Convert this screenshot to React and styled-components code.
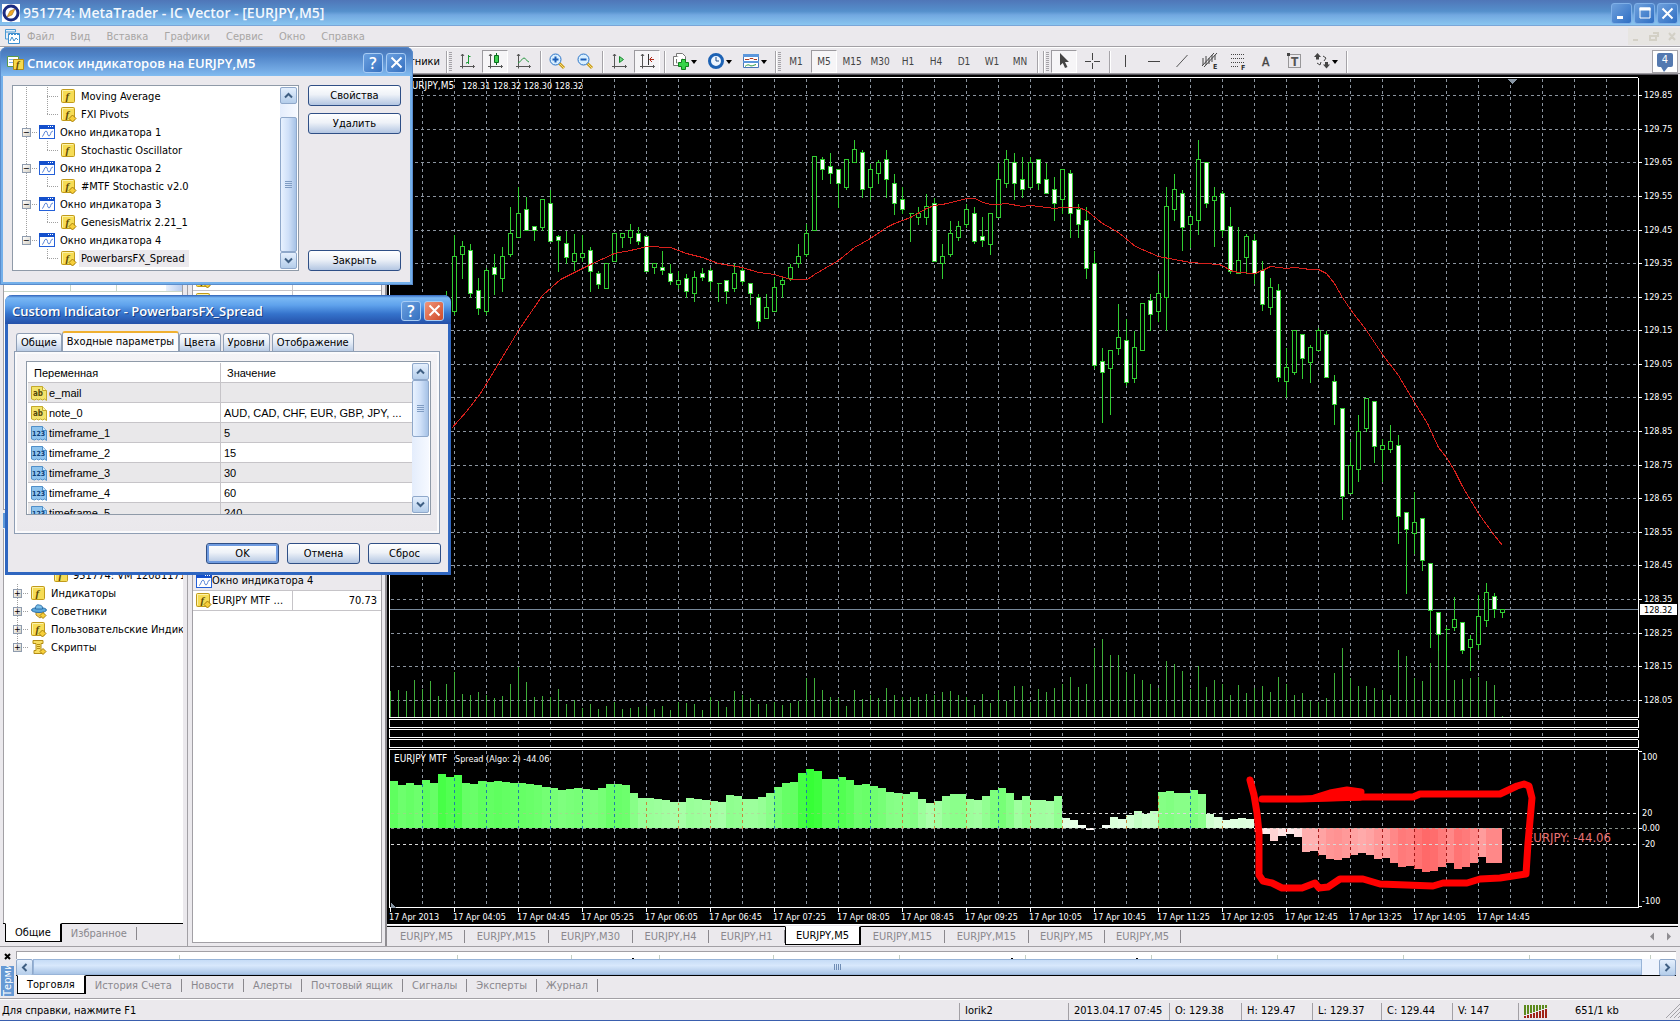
import { useState } from "react";
import styled, { createGlobalStyle, css } from "styled-components";

const FONT = `"DejaVu Sans Condensed", Tahoma, "DejaVu Sans", sans-serif`;
const TITLE_FONT = `"Open Sans", "Trebuchet MS", sans-serif`;

/* chart data: y of high, body top, body bottom, low, 1 = falling bar */
const FIRST_CANDLE = 7;
const candles = [
  [290, 297, 330, 340, 0], [234, 256, 311, 314, 0], [240, 246, 254, 278, 0], [243, 250, 293, 297, 1],
  [277, 290, 308, 314, 1], [267, 270, 311, 314, 0], [253, 267, 274, 294, 1], [246, 256, 278, 291, 0],
  [206, 233, 254, 256, 0], [186, 213, 237, 237, 0], [196, 209, 230, 230, 1], [226, 226, 230, 240, 1],
  [199, 199, 227, 230, 0], [189, 203, 241, 241, 1], [234, 236, 240, 271, 1], [230, 243, 257, 263, 1],
  [233, 253, 261, 270, 0], [234, 253, 257, 261, 0], [246, 250, 271, 291, 1], [270, 273, 284, 288, 1],
  [263, 263, 288, 288, 0], [233, 233, 261, 261, 0], [233, 233, 237, 247, 0], [223, 230, 237, 243, 0],
  [226, 233, 241, 244, 1], [236, 236, 271, 271, 1], [263, 263, 267, 273, 0], [250, 267, 270, 274, 1],
  [263, 273, 281, 284, 1], [270, 280, 284, 288, 0], [273, 278, 291, 297, 1], [270, 277, 293, 301, 0],
  [267, 273, 277, 280, 1], [267, 270, 281, 290, 1], [283, 283, 283, 301, 0], [280, 280, 291, 303, 1],
  [263, 273, 288, 291, 0], [267, 270, 281, 284, 1], [283, 283, 293, 304, 1], [293, 297, 321, 328, 1],
  [293, 307, 318, 318, 0], [277, 287, 311, 311, 0], [277, 280, 284, 297, 0], [263, 267, 278, 280, 0],
  [243, 256, 263, 267, 0], [223, 233, 254, 256, 0], [156, 156, 230, 230, 0], [156, 159, 169, 179, 1],
  [152, 166, 173, 183, 1], [168, 169, 183, 207, 1], [159, 159, 187, 189, 0], [139, 149, 162, 162, 0],
  [149, 152, 189, 197, 1], [163, 169, 187, 199, 0], [159, 162, 173, 183, 0], [149, 159, 179, 197, 1],
  [173, 183, 203, 214, 1], [186, 199, 209, 213, 1], [213, 213, 213, 241, 0], [206, 213, 217, 224, 0],
  [193, 206, 217, 224, 0], [197, 203, 261, 261, 1], [243, 256, 263, 278, 0], [220, 233, 254, 256, 0],
  [220, 226, 237, 240, 0], [203, 209, 224, 227, 0], [206, 213, 241, 243, 1], [216, 236, 240, 246, 1],
  [213, 213, 244, 254, 0], [162, 179, 217, 217, 0], [149, 159, 183, 187, 0], [152, 162, 183, 199, 1],
  [156, 179, 189, 197, 1], [156, 162, 187, 187, 0], [159, 159, 183, 189, 1], [162, 179, 193, 193, 1],
  [176, 189, 203, 220, 1], [169, 169, 199, 213, 0], [169, 173, 213, 237, 1], [203, 209, 224, 237, 1],
  [206, 220, 268, 278, 1], [250, 263, 365, 368, 1], [347, 361, 372, 422, 1], [350, 350, 368, 414, 0],
  [303, 337, 348, 354, 0], [318, 340, 382, 385, 1], [330, 347, 378, 382, 0], [303, 303, 350, 350, 0],
  [293, 300, 314, 330, 1], [273, 293, 311, 321, 0], [186, 206, 297, 330, 0], [173, 189, 209, 220, 0],
  [189, 193, 227, 250, 1], [213, 216, 224, 247, 0], [139, 159, 220, 234, 0], [162, 162, 203, 207, 1],
  [186, 196, 200, 246, 0], [190, 193, 230, 236, 1], [206, 226, 271, 273, 1], [226, 260, 273, 273, 0],
  [233, 236, 257, 273, 0], [233, 240, 273, 283, 1], [260, 270, 304, 310, 1], [277, 287, 307, 314, 0],
  [283, 290, 377, 381, 1], [347, 367, 381, 397, 0], [330, 330, 372, 374, 0], [334, 334, 358, 378, 1],
  [344, 347, 362, 382, 0], [327, 330, 350, 350, 0], [330, 334, 377, 377, 1], [374, 381, 404, 424, 1],
  [408, 408, 496, 519, 1], [441, 465, 493, 493, 0], [414, 431, 469, 481, 0], [398, 398, 428, 431, 0],
  [401, 401, 446, 462, 1], [438, 445, 449, 481, 0], [424, 441, 449, 452, 0], [434, 445, 516, 543, 1],
  [512, 512, 529, 593, 1], [491, 522, 533, 553, 0], [518, 518, 560, 570, 1], [563, 563, 610, 647, 1],
  [612, 612, 634, 650, 1], [626, 629, 629, 670, 0], [596, 619, 627, 630, 0], [622, 622, 650, 653, 1],
  [634, 639, 647, 670, 0], [594, 616, 644, 649, 0], [582, 592, 620, 626, 0], [592, 596, 609, 617, 1],
  [609, 609, 612, 617, 0],
];

const volumes = [
  690, 689, 690, 679, 688, 680, 695, 683, 671, 693, 694, 691, 694, 697, 695, 683, 666, 681, 696, 695,
  696, 688, 703, 699, 707, 703, 708, 705, 701, 708, 707, 706, 705, 708, 705, 709, 701, 702, 703, 709,
  696, 700, 706, 690, 694, 697, 703, 703, 701, 704, 702, 700, 677, 677, 689, 696, 697, 705, 689, 698,
  694, 697, 687, 694, 696, 696, 696, 693, 694, 691, 690, 694, 696, 704, 693, 702, 689, 700, 685, 685,
  701, 688, 691, 687, 683, 676, 686, 683, 647, 638, 654, 654, 671, 673, 679, 683, 687, 660, 663, 670,
  688, 665, 686, 679, 683, 694, 684, 692, 687, 685, 691, 676, 683, 694, 692, 700, 701, 697, 672, 647,
  677, 685, 685, 687, 689, 694, 649, 655, 677, 680, 662, 640, 630, 679, 678, 677, 676, 680, 684, 715,
];

const spread = [
  781, 785, 783, 785, 780, 783, 774, 777, 775, 783, 784, 781, 782, 781, 782, 783, 783, 784, 785, 787,
  788, 790, 789, 788, 789, 790, 788, 784, 784, 785, 793, 798, 798, 799, 800, 802, 802, 798, 799, 800,
  801, 802, 795, 796, 799, 799, 797, 793, 787, 783, 782, 773, 769, 771, 779, 779, 777, 780, 785, 784,
  786, 788, 792, 793, 794, 792, 799, 803, 801, 796, 794, 794, 799, 800, 796, 790, 788, 793, 800, 796,
  800, 800, 801, 796, 818, 820, 825, 830, 828, 825, 817, 819, 815, 811, 814, 811, 792, 791, 793, 793,
  790, 794, 814, 817, 820, 819, 818, 819, 832, 834, 841, 836, 834, 837, 852, 851, 855, 859, 860, 858,
  855, 853, 855, 859, 858, 863, 867, 866, 869, 872, 871, 867, 863, 869, 867, 863, 857, 863, 863,
];
const ZERO = 828;

const maLine =
  "451,428 466,411 480,393 500,360 518,330 542,295 560,279 590,264 614,253 630,250 647,246 670,247 686,253 702,257 718,263 742,267 758,272 774,274 790,279 796,279 807,279 814,274 838,260 854,247 870,238 886,227 894,223 910,217 926,208 934,205 942,204 967,198 974,198 983,202 990,204 998,204 1006,203 1022,206 1030,205 1054,208 1062,207 1078,207 1086,210 1102,223 1118,232 1135,246 1158,256 1174,259 1190,262 1218,264 1222,265 1230,270 1238,272 1254,273 1262,270 1270,266 1286,268 1294,267 1310,269 1318,269 1326,273 1334,283 1342,297 1350,309 1366,330 1382,354 1398,375 1414,402 1427,423 1438,447 1446,457 1454,470 1462,486 1478,513 1494,535 1502,545";

const markerLine =
  "1250,780 1254,795 1257,813 1259,833 1259,875 1263,881 1272,883 1282,888 1302,888 1315,883 1319,888 1328,887 1340,879 1363,879 1380,884 1433,886 1443,883 1467,883 1480,879 1500,878 1526,874 1528,843 1532,798 1529,786 1524,784 1517,786 1500,794 1420,794 1413,797 1363,797 1300,799 1262,799";

const priceLevels = [
  [95, "129.85"], [129, "129.75"], [162, "129.65"], [196, "129.55"], [230, "129.45"], [263, "129.35"],
  [297, "129.25"], [330, "129.15"], [364, "129.05"], [397, "128.95"], [431, "128.85"], [465, "128.75"],
  [498, "128.65"], [532, "128.55"], [565, "128.45"], [599, "128.35"], [633, "128.25"], [666, "128.15"],
  [700, "128.05"],
];
const spreadLevels = [[757, "100"], [813, "20"], [828, "0.00"], [844, "-20"], [901, "-100"]];
const frames = [[77, 717], [719, 727], [729, 737], [739, 747], [749, 907]];
const times = [
  "2013", "04:05", "04:45", "05:25", "06:05", "06:45", "07:25", "08:05", "08:45", "09:25", "10:05",
  "10:45", "11:25", "12:05", "12:45", "13:25", "14:05", "14:45",
];
const barX = (i) => 390 + i * 8;

const menuItems = ["Файл", "Вид", "Вставка", "Графики", "Сервис", "Окно", "Справка"];
const frameItems = ["M1", "M5", "M15", "M30", "H1", "H4", "D1", "W1", "MN"];
const chartTabs = ["M5", "M15", "M30", "H4", "H1", "M5", "M15", "M15", "M5", "M5"];
const terminalTabs = [
  "Торговля", "История Счета", "Новости", "Алерты", "Почтовый ящик", "Сигналы", "Эксперты", "Журнал",
];
/* column width, distance of the row mark from the right edge */
const terminalCells = [
  [163], [278], [114], [88, 25], [114], [126], [126, 12], [126, 13], [126], [126], [126], [121],
];
const indicators = [
  { name: "Moving Average" },
  { name: "FXI Pivots", custom: true, last: true },
  { name: "Окно индикатора 1", win: true },
  { name: "Stochastic Oscillator", last: true },
  { name: "Окно индикатора 2", win: true },
  { name: "#MTF Stochastic v2.0", custom: true, last: true },
  { name: "Окно индикатора 3", win: true },
  { name: "GenesisMatrix 2.21_1", custom: true, last: true },
  { name: "Окно индикатора 4", win: true },
  { name: "PowerbarsFX_Spread", custom: true, last: true, selected: true },
];
const params = [
  ["ab", "e_mail", ""],
  ["ab", "note_0", "AUD, CAD, CHF, EUR, GBP, JPY, ..."],
  ["123", "timeframe_1", "5"],
  ["123", "timeframe_2", "15"],
  ["123", "timeframe_3", "30"],
  ["123", "timeframe_4", "60"],
  ["123", "timeframe_5", "240"],
];
const dialogTabs = ["Общие", "Входные параметры", "Цвета", "Уровни", "Отображение"];
const statusCells = [
  [109, "Iorik2"], [101, "2013.04.17 07:45"], [72, "O: 129.38"], [71, "H: 129.47"], [69, "L: 129.37"],
  [71, "C: 129.44"], [66, "V: 147"],
];

/* ---------- icons ---------- */
function FIcon({ custom }) {
  return (
    <svg width="16" height="15" viewBox="0 0 16 15" aria-hidden="true">
      <rect x=".5" y=".5" width="13" height="13" rx="1" fill="#f6dc55" stroke="#c09a1c" />
      <path d="M1.5 12V1.5H12" fill="none" stroke="#fdf3a8" />
      <text x="4.5" y="10.5" fontFamily="Liberation Serif, serif" fontStyle="italic" fontWeight="bold" fontSize="11" fill="#5e4a08">f</text>
      {custom && <path d="M11.5 8 15 11.5 11.5 15 8 11.5z" fill="#f7cf3a" stroke="#a8800c" />}
    </svg>
  );
}
function WinIcon() {
  return (
    <svg width="16" height="14" viewBox="0 0 16 14" aria-hidden="true">
      <rect x=".5" y=".5" width="15" height="13" fill="#fff" stroke="#2460d8" />
      <path d="M0 0h16v4H0z" fill="#1450cc" />
      <path d="M9 1.5h1M11 1.5h1M13 1.5h1" stroke="#fff" />
      <path d="M3 11.5C5 11.5 5 6 7 6s1 5 3 5 1-5 4-5" fill="none" stroke="#5b86d8" />
    </svg>
  );
}
function ParamIcon({ kind }) {
  const text = kind === "ab";
  return (
    <svg width="16" height="16" viewBox="0 0 16 16" aria-hidden="true">
      <path
        d="M.5 1.5h11l4 4v10l-2-1.500-2 1-2-1-2 1-2-1-2 1-3-1z"
        fill={text ? "#f3e36c" : "#8fc4ee"}
        stroke={text ? "#c2a92c" : "#4f8fc8"}
      />
      <path d="M11.500 1.500v4h4" fill={text ? "#fdf6b4" : "#d3eafb"} stroke={text ? "#c2a92c" : "#4f8fc8"} />
      <text x={text ? 2 : 1} y="11" fontFamily={FONT} fontWeight="bold" fontSize={text ? 8 : 7} fill={text ? "#55490a" : "#0d3f78"}>
        {kind}
      </text>
    </svg>
  );
}
function AgentIcon() {
  return (
    <svg width="16" height="15" viewBox="0 0 16 15" aria-hidden="true">
      <path d="M5 7h7l1 4-4 3-4-3z" fill="#f2cd5a" stroke="#b08a20" />
      <ellipse cx="8" cy="6" rx="7.500" ry="2.500" fill="#5aa7dc" stroke="#2c6fa8" />
      <path d="M4.500 5C4.500 1 6 .5 8 1s3.500 0 3.500 4z" fill="#7cc0ea" stroke="#2c6fa8" />
      <path d="M12 8.500 15 11.500 12 14.500 9 11.500z" fill="#f7cf3a" stroke="#a8800c" />
    </svg>
  );
}
function ScriptIcon() {
  return (
    <svg width="16" height="15" viewBox="0 0 16 15" aria-hidden="true">
      <path d="M2 .5h10v3H10v7h2v3H3v-3h2v-7H2z" fill="#f8de62" stroke="#b58d14" />
      <path d="M6 4.500h3M6 6.500h3M6 8.500h3" stroke="#b58d14" />
      <path d="M12 8.500 15 11.500 12 14.500 9 11.500z" fill="#f7cf3a" stroke="#a8800c" />
    </svg>
  );
}
const axes = "M3.500 1v14.500M1 13.500h14.500M2 3l1.500-2L5 3M14 12l1.500 1.500L14 15";
const toolPaths = {
  bars: (
    <>
      <path d={axes} stroke="#555" fill="none" />
      <path d="M9.500 2v9M9.500 3.500h2M7.500 9.500h2M7.500 9.500v1" stroke="#1a9a34" fill="none" />
    </>
  ),
  candles: (
    <>
      <path d={axes} stroke="#555" fill="none" />
      <path d="M9.500 0v12" stroke="#0b6b1e" />
      <path d="M7.500 2.500h4v7h-4z" fill="#3fd050" stroke="#0b6b1e" />
    </>
  ),
  line: (
    <>
      <path d={axes} stroke="#555" fill="none" />
      <path d="M3 10C6 9 7 5 9 5s2 3 5 4" stroke="#2c9a44" fill="none" />
    </>
  ),
  scroll: (
    <>
      <path d={axes} stroke="#555" fill="none" />
      <path d="M8.500 3.500v6l4-3z" fill="#6fd67f" stroke="#168a2e" />
    </>
  ),
  shift: (
    <>
      <path d={axes} stroke="#555" fill="none" />
      <path d="M9.500 1v11" stroke="#333" />
      <path d="M15 6.500h-4M13 4l-2.500 2.500L13 9" stroke="#b02a1a" fill="none" />
    </>
  ),
  zoomIn: (
    <>
      <path d="M10 10l5 5" stroke="#c89a1c" strokeWidth="3" />
      <path d="M10 10l5 5" stroke="#f6e07a" />
      <circle cx="6.500" cy="6.500" r="5.500" fill="#d9efff" stroke="#2a74c8" />
      <path d="M3.500 6.500h6M6.500 3.500v6" stroke="#1c5fb8" strokeWidth="2" />
    </>
  ),
  zoomOut: (
    <>
      <path d="M10 10l5 5" stroke="#c89a1c" strokeWidth="3" />
      <path d="M10 10l5 5" stroke="#f6e07a" />
      <circle cx="6.500" cy="6.500" r="5.500" fill="#d9efff" stroke="#2a74c8" />
      <path d="M3.500 6.500h6" stroke="#1c5fb8" strokeWidth="2" />
    </>
  ),
  add: (
    <>
      <path d="M.5 3.500h7l3 3v6H.5z" fill="#fff" stroke="#777" />
      <path d="M3.500 3V.5h6l3 3V7" fill="#fff" stroke="#777" />
      <path d="M3.500 6v4h1" fill="none" stroke="#777" />
      <path d="M8.500 6.500h4v3h3v4h-3v3h-4v-3h-3v-4h3z" fill="#35d448" stroke="#12801f" />
    </>
  ),
  clock: (
    <>
      <circle cx="8" cy="8" r="6.500" fill="#eef6ff" stroke="#1d62b4" strokeWidth="3" />
      <path d="M8 4v4h3" stroke="#1d4a84" fill="none" />
    </>
  ),
  template: (
    <>
      <path d="M.5 1.500h15v13H.5z" fill="#fff" stroke="#4a78b8" />
      <path d="M0 1h16v3H0zM0 8h16v2H0z" fill="#5b97dc" />
      <path d="M2 6.500h4l1-1h3l1 1h3" stroke="#b03a20" fill="none" />
      <path d="M2 13.500c2-2 4-2 5-1s3 0 6-1" stroke="#2c9a44" fill="none" />
    </>
  ),
  cursor: <path d="M4 0l9 9H9l2.500 5-2.500 1-2.200-5L4 12.500z" fill="#444" />,
  cross: <path d="M8.500 0v7M8.500 10v6M1 8.500h6M10 8.500h6" stroke="#444" />,
  vline: <path d="M7.500 2v12" stroke="#444" />,
  hline: <path d="M2 8.500h12" stroke="#444" />,
  trend: <path d="M2.500 14 13.500 2" stroke="#555" />,
  channel: (
    <>
      <path d="M0 13 12 0M2 14 15 0M1 5v7M4 3v9M7 5v6M10 2v7M13 2v5" stroke="#444" fill="none" />
      <text x="11" y="16" fontSize="7" fontWeight="bold" fill="#333" fontFamily={FONT}>E</text>
    </>
  ),
  fibo: (
    <>
      <path d="M1 1.500h14M1 5.500h14M1 9.500h14M1 13.500h8" stroke="#444" strokeDasharray="1 1" />
      <text x="11" y="17" fontSize="7" fontWeight="bold" fill="#333" fontFamily={FONT}>F</text>
    </>
  ),
  text: <text x="4" y="13" fontSize="12" fill="#444" stroke="#444" strokeWidth=".4" fontFamily={FONT}>A</text>,
  label: (
    <>
      <path d="M2.500 1.500h12v13h-12z" fill="none" stroke="#444" strokeDasharray="1 1" />
      <path d="M1 0h3v3H1z" fill="#444" />
      <text x="5" y="13" fontSize="12" fontWeight="bold" fill="#555" fontFamily={FONT}>T</text>
    </>
  ),
  arrows: (
    <>
      <path d="M3.500 0 7 4H5v2.500H2V4H0zM12.500 15.500 9 11.500h2V9h3v2.500h2z" fill="#444" />
      <path d="M3 10l3 2 1-3M9 3l3 2-2 3" stroke="#444" fill="none" />
    </>
  ),
};

function Tool({ icon, label, pressed, menu }) {
  return (
    <ToolButton type="button" aria-label={label} $pressed={pressed} $menu={menu}>
      <svg width="16" height="17" viewBox="0 0 16 17" overflow="visible" aria-hidden="true">
        {toolPaths[icon]}
      </svg>
      {menu && (
        <svg width="6" height="4" viewBox="0 0 6 4" aria-hidden="true">
          <path d="M0 0h6L3 4z" fill="#000" />
        </svg>
      )}
    </ToolButton>
  );
}

function Chevron({ dir }) {
  const turn = { up: 0, right: 90, down: 180, left: 270 }[dir];
  return (
    <svg width="9" height="9" viewBox="0 0 9 9" aria-hidden="true">
      <path d="M1 6.500 4.500 3 8 6.500" fill="none" stroke="#3f5f83" strokeWidth="2" transform={`rotate(${turn} 4.500 4.500)`} />
    </svg>
  );
}

function VScroll({ before, size }) {
  return (
    <ScrollTrack>
      <ScrollButton type="button" aria-label="Вверх"><Chevron dir="up" /></ScrollButton>
      <ScrollGap $h={before} />
      <ScrollThumb $h={size}><i /><i /><i /><i /></ScrollThumb>
      <Fill />
      <ScrollButton type="button" aria-label="Вниз"><Chevron dir="down" /></ScrollButton>
    </ScrollTrack>
  );
}

/* ---------- chart ---------- */
function Candle({ x, data }) {
  const [high, top, bottom, low, falling] = data;
  const body = bottom - top;
  return (
    <g stroke="#32cd32">
      {high < top && <path d={`M${x} ${high}V${top}`} />}
      {low > bottom && <path d={`M${x} ${bottom}V${low}`} />}
      {body ? (
        <rect x={x - 2} y={top} width="4" height={body} fill={falling ? "#fff" : "#000"} />
      ) : (
        <path d={`M${x - 2} ${top}h5`} />
      )}
    </g>
  );
}

function spreadColor(y) {
  const size = Math.abs(ZERO - y);
  const rest = Math.round(255 - size * 3.4);
  return y > ZERO ? `rgb(255,${rest},${rest})` : `rgb(${rest},255,${rest})`;
}

function gridOverBar(y) {
  if (y > ZERO) return "#a01818";
  return ZERO - y > 37 ? "#1f7fa8" : "#c8863c";
}

function Chart() {
  return (
    <ChartCanvas>
      <Plot role="img" aria-label="EURJPY,M5">
        <g transform="translate(-386.500 -74.500)" fill="none" shapeRendering="crispEdges">
          <g stroke="#8b949f" strokeDasharray="3 3">
            {Array.from({ length: 60 }, (_, k) => (
              <path key={k} d={`M${422 + k * 32} 78V906`} />
            ))}
            {priceLevels.map(([y]) => (
              <path key={y} d={`M390 ${y}H2400`} />
            ))}
          </g>
          <path d="M389 609H2400" stroke="#778899" />
          <g stroke="#3fae3a">
            {volumes.map((y, i) => (
              <path key={i} d={`M${barX(i)} ${y}V717`} />
            ))}
          </g>
          {candles.map((c, i) => (
            <Candle key={i} x={barX(i + FIRST_CANDLE)} data={c} />
          ))}
          <polyline points={maLine} stroke="#d8201c" />

          {spread.map((y, i) => (
            <rect
              key={i}
              x={barX(i) - 0.5}
              y={Math.min(y, ZERO) - 0.5}
              width="8"
              height={Math.abs(ZERO - y)}
              fill={spreadColor(y)}
            />
          ))}
          {spread.map((y, i) =>
            i % 4 === 0 && i > 0 ? (
              <path key={i} d={`M${barX(i)} ${ZERO}V${y}`} stroke={gridOverBar(y)} strokeDasharray="3 3" />
            ) : null
          )}
          <path d="M390 813H1180" stroke="#c8b49a" strokeDasharray="3 3" opacity=".4" />
          <path d="M390 828H2400" stroke="#a9b3ad" strokeDasharray="3 3" opacity=".8" />
          <path d="M1062 813H2400M390 844H2400" stroke="#d8d8d8" strokeDasharray="3 3" />

          {frames.map(([top, bottom]) => (
            <path key={top} d={`M2400 ${top}H389V${bottom}H2400`} stroke="#fff" />
          ))}
          {times.map((t, i) => (
            <path key={t} d={`M${390 + i * 64} 907v4`} stroke="#fff" />
          ))}
          <path d="M1507 78h10l-5 6z" fill="#8795a3" />
          <path d="M390 902v5h5z" fill="#8795a3" />
        </g>
        <g transform="translate(-387 -75)">
          <ChartText x="406" y="89" $size={10}>EURJPY,M5</ChartText>
          <ChartText x="462" y="89">128.31 128.32 128.30 128.32</ChartText>
          <ChartText x="394" y="762" $size={10}>EURJPY MTF</ChartText>
          <ChartText x="455" y="762">Spread (Algo: 2) -44.06</ChartText>
          {times.map((t, i) => (
            <ChartText key={t} x={389 + i * 64} y="920">17 Apr {t}</ChartText>
          ))}
          <ChartText x="1611" y="842" textAnchor="end" $size={13} $color="#ea7474">EURJPY: -44.06</ChartText>
          <g fill="none" stroke="#f00" strokeWidth="7" strokeLinecap="round" strokeLinejoin="round">
            <polyline points={markerLine} />
            <path d="M1314 798 1330 793 1347 790 1361 792 1360 797z" fill="#f00" />
          </g>
        </g>
      </Plot>
      <Axis aria-hidden="true">
        <g transform="translate(-1637.500 -74.500)" stroke="#fff" shapeRendering="crispEdges">
          {frames.map(([top, bottom]) => (
            <path key={top} d={`M1638 ${top}V${bottom}`} />
          ))}
          {priceLevels.map(([y]) => (
            <path key={y} d={`M1638 ${y}h3`} />
          ))}
          <path d="M1638 751h3M1638 828h3M1638 906h3" />
          <path d="M1640 604h36v10h-36z" fill="#fff" />
        </g>
        <g transform="translate(-1638 -75)">
          {priceLevels.map(([y, t]) => (
            <ChartText key={t} x="1644" y={y + 3}>{t}</ChartText>
          ))}
          <ChartText x="1644" y="613" $color="#000">128.32</ChartText>
          {spreadLevels.map(([y, t]) => (
            <ChartText key={t} x="1642" y={y + 3}>{t}</ChartText>
          ))}
        </g>
      </Axis>
    </ChartCanvas>
  );
}

/* ---------- windows ---------- */
function IndicatorList() {
  return (
    <ListDialog role="dialog" aria-label="Список индикаторов на EURJPY,M5">
      <DialogTitle>
        <svg width="17" height="15" viewBox="0 0 17 15" aria-hidden="true">
          <path d="M.5 1.500h11v10H.5z" fill="#fff" stroke="#5d9a48" />
          <path d="M2 4.500h8M2 7.500h8" stroke="#7db2e8" />
          <path d="M6.500 4.500h10v10h-10z" fill="#f6d94a" stroke="#b38d14" />
          <text x="9" y="13" fontFamily="Liberation Serif, serif" fontStyle="italic" fontWeight="bold" fontSize="10" fill="#5e4a08">f</text>
        </svg>
        <span>Список индикаторов на EURJPY,M5</span>
        <TitleButton type="button" aria-label="Справка">?</TitleButton>
        <TitleButton type="button" aria-label="Закрыть"><CloseMark /></TitleButton>
      </DialogTitle>
      <ListBody>
        <ListBox>
          <Tree>
            {indicators.map((row) => (
              <TreeRow key={row.name}>
                {row.win ? (
                  <>
                    <RootBranch $end={row.name.endsWith("4")}><Expander>−</Expander></RootBranch>
                    <WinIcon />
                    <TreeLabel $gap={3}>{row.name}</TreeLabel>
                  </>
                ) : (
                  <>
                    <RootBranch $plain $hide={row.selected} />
                    <ChildBranch $last={row.last} />
                    <FIcon custom={row.custom} />
                    <TreeLabel $gap={2} $selected={row.selected}>{row.name}</TreeLabel>
                  </>
                )}
              </TreeRow>
            ))}
          </Tree>
          <VScroll before={13} size={135} />
        </ListBox>
        <ButtonColumn>
          <XpButton type="button">Свойства</XpButton>
          <XpButton type="button">Удалить</XpButton>
          <Fill />
          <XpButton type="button">Закрыть</XpButton>
        </ButtonColumn>
      </ListBody>
    </ListDialog>
  );
}

function CloseMark() {
  return (
    <svg width="13" height="13" viewBox="0 0 13 13" aria-hidden="true">
      <path d="M1.500 1.500l10 10M11.500 1.500l-10 10" stroke="#fff" strokeWidth="2" />
    </svg>
  );
}

function ParamsDialog() {
  const [tab, setTab] = useState(1);
  return (
    <IndicatorDialog role="dialog" aria-label="Custom Indicator - PowerbarsFX_Spread">
      <DialogTitle $active>
        <span>Custom Indicator - PowerbarsFX_Spread</span>
        <TitleButton type="button" aria-label="Справка">?</TitleButton>
        <TitleButton type="button" $danger aria-label="Закрыть"><CloseMark /></TitleButton>
      </DialogTitle>
      <DialogTabs role="tablist">
        {dialogTabs.map((t, i) => (
          <DialogTab key={t} type="button" role="tab" aria-selected={tab === i} $on={tab === i} onClick={() => setTab(i)}>
            {t}
          </DialogTab>
        ))}
      </DialogTabs>
      <TabPage>
        <TableBox>
          <ParamTable>
            <thead>
              <tr><th>Переменная</th><th>Значение</th></tr>
            </thead>
            <tbody>
              {params.map(([kind, name, value]) => (
                <tr key={name}>
                  <td><ParamName><ParamIcon kind={kind} />{name}</ParamName></td>
                  <td>{value}</td>
                </tr>
              ))}
            </tbody>
          </ParamTable>
          <VScroll before={0} size={57} />
        </TableBox>
      </TabPage>
      <DialogFooter>
        <XpButton type="button" $primary>OK</XpButton>
        <XpButton type="button">Отмена</XpButton>
        <XpButton type="button">Сброс</XpButton>
      </DialogFooter>
    </IndicatorDialog>
  );
}

export default function App() {
  return (
    <Desktop>
      <GlobalStyle />
      <TitleBar>
        <svg width="18" height="18" viewBox="0 0 18 18" aria-hidden="true">
          <path d="M0 0h18v18H0z" fill="#fff" />
          <circle cx="9" cy="9" r="7" fill="#fff" stroke="#1b2a80" strokeWidth="3" />
          <path d="M13 5 10 11 5 13 8 7z" fill="#f0a828" stroke="#8a5a10" strokeWidth=".5" />
        </svg>
        <h1>951774: MetaTrader - IC Vector - [EURJPY,M5]</h1>
        <WindowButton type="button" aria-label="Свернуть">
          <svg width="12" height="12" aria-hidden="true"><path d="M1 9h6v3H1z" fill="#fff" /></svg>
        </WindowButton>
        <WindowButton type="button" aria-label="Развернуть">
          <svg width="12" height="12" aria-hidden="true">
            <path d="M1 1h10v10H1z" fill="none" stroke="#fff" />
            <path d="M.5.5h11v3H.5z" fill="#fff" />
          </svg>
        </WindowButton>
        <WindowButton type="button" aria-label="Закрыть"><CloseMark /></WindowButton>
      </TitleBar>

      <MenuBar>
        <svg width="15" height="15" viewBox="0 0 15 15" aria-hidden="true">
          <path d="M.5 3V.5h10V3M.5 3v7h3" fill="#e4f0fb" stroke="#4a9ad4" />
          <path d="M.5 3h10" stroke="#4a9ad4" />
          <path d="M3.500 4.500h11v10h-11z" fill="#fff" stroke="#3d8fd0" />
          <path d="M3 5.500h11" stroke="#3d8fd0" strokeDasharray="2 1" />
          <path d="M5 12l2-4 2 4 2-3 2 2" fill="none" stroke="#3d8fd0" />
        </svg>
        {menuItems.map((m) => (
          <MenuItem key={m} type="button">{m}</MenuItem>
        ))}
        <Fill />
        <svg width="52" height="17" viewBox="0 0 52 17" aria-hidden="true">
          <path d="M0 0h52v17H0z" fill="#e7e5e2" />
          <path d="M5 12h5M25 5h5v4M22 8h6v4h-6zM41 5l6 7M47 5l-6 7" fill="none" stroke="#d3d0c6" strokeWidth="2" />
        </svg>
      </MenuBar>

      <Toolbar>
        <ExpertsButton type="button">Советники</ExpertsButton>
        <Divider /><Grip />
        <Tool icon="bars" label="Бары" />
        <Tool icon="candles" label="Свечи" pressed />
        <Tool icon="line" label="Линия" />
        <Divider />
        <Tool icon="zoomIn" label="Увеличить" />
        <Tool icon="zoomOut" label="Уменьшить" />
        <Divider />
        <Tool icon="scroll" label="Автопрокрутка" />
        <Tool icon="shift" label="Сдвиг графика" pressed />
        <Divider />
        <Tool icon="add" label="Индикаторы" menu />
        <Tool icon="clock" label="Периоды" menu />
        <Tool icon="template" label="Шаблоны" menu />
        <Divider /><Grip />
        {frameItems.map((f) => (
          <ToolButton key={f} type="button" $pressed={f === "M5"}>{f}</ToolButton>
        ))}
        <Divider /><Divider /><Grip />
        <Tool icon="cursor" label="Курсор" pressed />
        <Tool icon="cross" label="Перекрестие" />
        <Divider />
        <Tool icon="vline" label="Вертикальная линия" />
        <Tool icon="hline" label="Горизонтальная линия" />
        <Tool icon="trend" label="Трендовая линия" />
        <Tool icon="channel" label="Канал" />
        <Tool icon="fibo" label="Фибоначчи" />
        <Tool icon="text" label="Текст" />
        <Tool icon="label" label="Метка" />
        <Tool icon="arrows" label="Стрелки" menu />
        <Divider />
        <Fill />
        <NewsButton type="button">
          <NewsBadge>4</NewsBadge>
          <svg width="8" height="5" viewBox="0 0 8 5" aria-hidden="true">
            <path d="M0 0h7L3 5z" fill="#5479b0" />
          </svg>
        </NewsButton>
      </Toolbar>

      <Workspace>
        <SideColumn>
          <MarketBox><MarketGrid><i /><i /><i /></MarketGrid></MarketBox>
          <PanelCaption />
          <NavTree>
            <NavRow $child><FIcon /><TreeLabel $gap={1}>951774: VM 12081171</TreeLabel></NavRow>
            <NavRow><NavBranch><Expander>+</Expander></NavBranch><FIcon /><TreeLabel $gap={2}>Индикаторы</TreeLabel></NavRow>
            <NavRow><NavBranch><Expander>+</Expander></NavBranch><AgentIcon /><TreeLabel $gap={2}>Советники</TreeLabel></NavRow>
            <NavRow><NavBranch><Expander>+</Expander></NavBranch><FIcon custom /><TreeLabel $gap={2}>Пользовательские Индикаторы</TreeLabel></NavRow>
            <NavRow><NavBranch $end><Expander>+</Expander></NavBranch><ScriptIcon /><TreeLabel $gap={2}>Скрипты</TreeLabel></NavRow>
          </NavTree>
          <NavTabs>
            <SheetTab type="button" $on>Общие</SheetTab>
            <SheetTab type="button">Избранное</SheetTab>
          </NavTabs>
        </SideColumn>

        <DataColumn>
          <DataBox>
            <DataTable>
              <tbody>
                {Array.from({ length: 15 }, (_, i) => (
                  <tr key={i}><td><DataName>{i < 2 && <FIcon custom />}</DataName></td><td /></tr>
                ))}
                <tr><DataHead colSpan="2"><DataName><WinIcon />Окно индикатора 4</DataName></DataHead></tr>
                <tr><td><DataName><FIcon custom />EURJPY MTF ...</DataName></td><td>70.73</td></tr>
              </tbody>
            </DataTable>
          </DataBox>
        </DataColumn>

        <ChartColumn>
          <Chart />
          <ChartTabs>
            {chartTabs.map((t, i) => (
              <SheetTab key={i} type="button" $on={i === 5} $w={t.length > 2 ? 84 : 76}>EURJPY,{t}</SheetTab>
            ))}
            <Fill />
            <svg width="22" height="9" viewBox="0 0 22 9" aria-hidden="true">
              <path d="M4 .5v8L0 4.500zM17 .5v8l4-4z" fill="#8f8d92" />
            </svg>
          </ChartTabs>
        </ChartColumn>
      </Workspace>

      <Terminal>
        <TerminalSide>
          <svg width="7" height="7" viewBox="0 0 7 7" aria-hidden="true">
            <path d="M1 1l5 5M6 1 1 6" stroke="#000" strokeWidth="2" />
          </svg>
          <TerminalName>Терминал</TerminalName>
        </TerminalSide>
        <TerminalBody>
          <TerminalRow>
            {terminalCells.map(([w, mark], i) => (
              <TerminalCell key={i} $w={w} $mark={mark}>{mark && <i />}</TerminalCell>
            ))}
          </TerminalRow>
          <HScroll>
            <ScrollButton type="button" aria-label="Влево"><Chevron dir="left" /></ScrollButton>
            <HThumb><i /><i /><i /><i /></HThumb>
            <HGap />
            <ScrollButton type="button" aria-label="Вправо"><Chevron dir="right" /></ScrollButton>
          </HScroll>
          <TerminalTabs>
            {terminalTabs.map((t, i) => (
              <SheetTab key={t} type="button" $on={i === 0}>{t}</SheetTab>
            ))}
          </TerminalTabs>
        </TerminalBody>
      </Terminal>

      <StatusBar>
        <StatusHint>Для справки, нажмите F1</StatusHint>
        {statusCells.map(([w, t]) => (
          <StatusCell key={t} $w={w}>{t}</StatusCell>
        ))}
        <StatusCell $w={162}>
          <svg width="24" height="13" viewBox="0 0 24 13" shapeRendering="crispEdges" aria-hidden="true">
            {Array.from({ length: 8 }, (_, i) => (
              <g key={i}>
                <path d={`M${i * 3} 0h2v${10 - i}h-2z`} fill="#5c8a1c" />
                <path d={`M${i * 3} 13h2v-${2 + i}h-2z`} fill="#a02418" />
              </g>
            ))}
          </svg>
          <Traffic>651/1 kb</Traffic>
          <svg width="14" height="14" viewBox="0 0 14 14" aria-hidden="true">
            <path d="M0 14 14 0M4 14 14 4M8 14l6-6M12 14l2-2" stroke="#a5a3a8" />
          </svg>
        </StatusCell>
      </StatusBar>

      <IndicatorList />
      <ParamsDialog />
    </Desktop>
  );
}

/* ---------- styles ---------- */
const GlobalStyle = createGlobalStyle`
  * { box-sizing: border-box; }
  body { margin: 0; background: #ebe9ed; }
  button { font: inherit; color: inherit; margin: 0; padding: 0; border: 0; background: none; }
  svg { flex: none; display: block; }
`;
const Desktop = styled.div`
  position: relative;
  display: flex;
  flex-direction: column;
  min-height: 100vh;
  overflow: hidden;
  font-family: ${FONT};
  font-size: 11px;
  line-height: 14px;
  color: #000;
  background: #ebe9ed;
`;
const Fill = styled.span`
  flex: 1;
`;
const TitleBar = styled.header`
  display: flex;
  align-items: center;
  gap: 2px;
  height: 26px;
  padding: 1px 2px 0;
  border-bottom: 1px solid #7aa6d8;
  background: linear-gradient(#4f76b8, #5590cc 45%, #72a8e0 60%, #8ac6f0);
  h1 {
    flex: 1;
    margin: 0;
    padding-left: 1px;
    font: 600 14px/18px ${TITLE_FONT};
    color: #f4f8fd;
  }
`;
const WindowButton = styled.button`
  display: grid;
  place-items: center;
  width: 21px;
  height: 21px;
  border: 1px solid #7fb0e8;
  border-radius: 3px;
  background: linear-gradient(135deg, #6ea0dc, #2f6fc4);
`;
const MenuBar = styled.nav`
  display: flex;
  align-items: center;
  height: 21px;
  padding-left: 5px;
  border-bottom: 1px solid #a2a0a5;
`;
const MenuItem = styled.button`
  margin: 0 9px 0 7px;
  padding-top: 1px;
  color: #a8a6a4;
`;
const Toolbar = styled.div`
  display: flex;
  align-items: center;
  height: 27px;
  padding: 2px 2px 0 381px;
  border-top: 1px solid #fff;
  border-bottom: 1px solid #9c9a9f;
`;
const ExpertsButton = styled.button`
  width: 62px;
  text-align: center;
`;
const Divider = styled.span`
  width: 1px;
  height: 22px;
  margin: 0 2px 0 3px;
  background: #a5a3a8;
  box-shadow: 1px 0 #fff;
`;
const Grip = styled.span`
  width: 3px;
  height: 19px;
  margin-right: 1px;
  background: repeating-linear-gradient(#a5a3a8 0 1px, transparent 1px 2px);
`;
const ToolButton = styled.button`
  display: flex;
  align-items: center;
  justify-content: center;
  gap: 2px;
  width: ${(props) => (props.$menu ? 35 : 28)}px;
  height: 23px;
  font-size: 10px;
  color: #444;
  ${(props) =>
    props.$pressed &&
    css`
      margin: 0 1px;
      width: 26px;
      border: 1px solid;
      border-color: #9c9a9f #fff #fff #9c9a9f;
      background: #f6f5f7;
    `}
`;
const NewsButton = styled.button`
  display: flex;
  flex-direction: column;
  align-items: center;
  width: 26px;
  height: 23px;
  padding-top: 2px;
  border: 1px solid #a5a3a8;
  background: #fff;
`;
const NewsBadge = styled.span`
  width: 16px;
  height: 14px;
  border-radius: 2px;
  background: #5479b0;
  color: #fff;
`;
const Workspace = styled.main`
  display: flex;
  flex: 1;
  border-bottom: 1px solid #a2a0a5;
`;
const SideColumn = styled.aside`
  display: flex;
  flex-direction: column;
  width: 188px;
  padding: 0 4px 3px 3px;
  border-right: 1px solid #a2a0a5;
`;
const MarketBox = styled.div`
  height: 436px;
  padding-top: 198px;
  border: 1px solid #a2a0a5;
  border-top: 0;
  background: #fff;
`;
const MarketGrid = styled.div`
  display: flex;
  height: 20px;
  border-bottom: 1px solid #c9d6c9;
  i {
    width: 68px;
    border-right: 1px solid #c9d6c9;
  }
  i + i {
    width: 46px;
  }
  i + i + i {
    width: 16px;
    margin-left: 49px;
    border: 0;
    background: linear-gradient(90deg, #e8f0fd, #b8ccee);
  }
`;
const PanelCaption = styled.div`
  height: 15px;
  margin: 3px 0 1px;
  background: #5d97d8;
`;
const NavTree = styled.ul`
  flex: 1;
  margin: 0;
  padding: 37px 0 0;
  border-left: 1px solid #a2a0a5;
  list-style: none;
  overflow: hidden;
  background: #fff;
`;
const NavRow = styled.li`
  display: flex;
  align-items: center;
  height: 18px;
  padding-left: ${(props) => (props.$child ? 50 : 0)}px;
  white-space: nowrap;
`;
const dots = "repeating-linear-gradient(#a0a0a0 0 1px, transparent 1px 2px)";
const dotsX = "repeating-linear-gradient(90deg, #a0a0a0 0 1px, transparent 1px 2px)";
const NavBranch = styled.span`
  display: flex;
  flex: none;
  align-items: center;
  width: 27px;
  height: 18px;
  padding-left: 9px;
  background:
    ${dots} 13px 0 / 1px ${(props) => (props.$end ? "50%" : "100%")} no-repeat,
    ${dotsX} 13px 50% / 12px 1px no-repeat;
`;
const Expander = styled.span`
  width: 9px;
  height: 9px;
  border: 1px solid #8f9cae;
  background: linear-gradient(135deg, #fff, #d5d0c4);
  font-size: 9px;
  line-height: 7px;
  text-align: center;
`;
const TreeLabel = styled.span`
  margin-left: ${(props) => props.$gap}px;
  padding: 2px 4px 1px 2px;
  background: ${(props) => (props.$selected ? "#ebe9ed" : "transparent")};
`;
const NavTabs = styled.div`
  display: flex;
  height: 20px;
  padding-left: 2px;
  border-top: 1px solid #000;
`;
const SheetTab = styled.button`
  flex: none;
  align-self: flex-start;
  width: ${(props) => (props.$w ? `${props.$w}px` : "auto")};
  padding: 0 9px;
  color: #8a888d;
  white-space: nowrap;
  ${(props) =>
    props.$on
      ? css`
          height: 19px;
          margin-top: -1px;
          border: 1px solid #000;
          border-top-color: #fff;
          border-right-width: 2px;
          background: #fff;
          color: #000;
        `
      : css`
          height: 13px;
          margin-top: 3px;
          border-right: 1px solid #8a888d;
          line-height: 13px;
        `}
`;
const DataColumn = styled.aside`
  width: 199px;
  padding: 0 3px 3px 4px;
  border-right: 2px solid #8f8d92;
`;
const DataBox = styled.div`
  height: 100%;
  padding-top: 197px;
  border: 1px solid #a2a0a5;
  border-top: 0;
  background: #fff;
`;
const DataTable = styled.table`
  width: 188px;
  border-spacing: 0;
  table-layout: fixed;
  td {
    height: 20px;
    padding: 0 4px 0 3px;
    border-bottom: 1px solid #c6c4c8;
    text-align: right;
  }
  td:first-child:not([colspan]) {
    width: 100px;
    border-right: 1px solid #c6c4c8;
  }
`;
const DataHead = styled.td`
  background: #ebe9ed;
`;
const DataName = styled.div`
  display: flex;
  align-items: center;
  white-space: nowrap;
`;
const ChartColumn = styled.section`
  display: flex;
  flex: 1;
  flex-direction: column;
  min-width: 0;
  padding-right: 2px;
`;
const ChartCanvas = styled.div`
  display: flex;
  height: 851px;
  border-top: 1px solid #55535a;
  border-bottom: 1px solid #fff;
  background: #000;
`;
const Plot = styled.svg`
  flex: 1;
  min-width: 0;
  height: 100%;
`;
const Axis = styled.svg`
  width: 40px;
  height: 100%;
`;
const ChartText = styled.text`
  font-family: ${FONT};
  font-size: ${(props) => props.$size || 9}px;
  fill: ${(props) => props.$color || "#fff"};
`;
const ChartTabs = styled.div`
  display: flex;
  align-items: center;
  height: 20px;
  margin-top: 1px;
  padding: 0 6px 0 2px;
  border-top: 1px solid #000;
`;
const Terminal = styled.section`
  display: flex;
  height: 52px;
  padding-top: 4px;
  border-bottom: 1px solid #a2a0a5;
`;
const TerminalSide = styled.div`
  display: flex;
  flex-direction: column;
  align-items: center;
  gap: 6px;
  width: 16px;
  padding: 2px 2px 0 1px;
`;
const TerminalName = styled.div`
  width: 13px;
  height: 30px;
  overflow: hidden;
  writing-mode: vertical-rl;
  rotate: 180deg;
  line-height: 13px;
  background: #6699d4;
  color: #fff;
`;
const TerminalBody = styled.div`
  flex: 1;
  min-width: 0;
  padding-right: 4px;
`;
const TerminalRow = styled.div`
  display: flex;
  height: 8px;
  border-top: 1px solid #a2a0a5;
  border-left: 1px solid #a2a0a5;
  overflow: hidden;
  background: #fff;
`;
const TerminalCell = styled.span`
  display: flex;
  flex: none;
  align-items: flex-end;
  justify-content: flex-end;
  width: ${(props) => props.$w}px;
  height: 4px;
  margin-top: 3px;
  padding-right: ${(props) => props.$mark || 0}px;
  border-right: 1px solid #c3cfc3;
  i {
    width: 2px;
    height: 1px;
    background: #000;
  }
`;
const HScroll = styled.div`
  display: flex;
  height: 16px;
  background: #eef3fd;
`;
const HThumb = styled.div`
  display: flex;
  flex: 1;
  align-items: center;
  justify-content: center;
  gap: 1px;
  border: 1px solid #98b4d8;
  background: linear-gradient(#c6dcf6, #d8e8fc 40%, #a8c4e6);
  i {
    width: 1px;
    height: 6px;
    background: #6f8db5;
  }
`;
const HGap = styled.span`
  width: 17px;
`;
const TerminalTabs = styled.div`
  display: flex;
  padding-left: 1px;
  border-top: 1px solid #000;
`;
const StatusBar = styled.footer`
  display: flex;
  align-items: center;
  height: 22px;
  padding-top: 2px;
  border-top: 1px solid #fff;
  border-bottom: 1px solid #3a5fae;
`;
const StatusHint = styled.span`
  flex: 1;
  padding-left: 2px;
`;
const StatusCell = styled.span`
  display: flex;
  align-items: center;
  flex: none;
  width: ${(props) => props.$w}px;
  height: 17px;
  padding-left: 5px;
  border-left: 1px solid #a2a0a5;
  white-space: nowrap;
`;
const Traffic = styled.span`
  flex: 1;
  padding-left: 27px;
`;
const Dialog = styled.div`
  position: absolute;
  display: flex;
  flex-direction: column;
  background: #ebe9ed;
`;
const ListDialog = styled(Dialog)`
  top: 47px;
  left: 0;
  width: 413px;
  height: 238px;
  border: 3px solid #74b0ea;
  border-top: 0;
  border-radius: 7px 7px 0 0;
  outline: 1px solid #5a8ccc;
  outline-offset: -1px;
`;
const IndicatorDialog = styled(Dialog)`
  top: 295px;
  left: 5px;
  width: 446px;
  height: 280px;
  border: 3px solid #2f66c0;
  border-top: 0;
  border-radius: 7px 7px 0 0;
`;
const DialogTitle = styled.div`
  display: flex;
  flex: none;
  align-items: center;
  gap: 3px;
  height: 29px;
  margin: 0 -3px;
  padding: 2px 7px 0;
  border-radius: 7px 7px 0 0;
  color: #fff;
  font: 600 13px/18px ${TITLE_FONT};
  background: ${(props) =>
    props.$active
      ? "linear-gradient(#2f62b8, #7ab8f4 10%, #5fa2ec 35%, #3573cc 65%, #2450a8)"
      : "linear-gradient(#4a74b4, #4f84c8 30%, #74aae4 80%, #82bcf0)"};
  text-shadow: ${(props) => (props.$active ? "1px 1px #1c4080" : "none")};
  span {
    flex: 1;
  }
`;
const TitleButton = styled.button`
  display: grid;
  place-items: center;
  width: 20px;
  height: 20px;
  border: 1px solid #a8ccf4;
  border-radius: 3px;
  font-size: 16px;
  background: ${(props) =>
    props.$danger
      ? "linear-gradient(135deg, #f0957a, #d04a28)"
      : "linear-gradient(135deg, #6aa0e0, #3570c0)"};
`;
const ListBody = styled.div`
  display: flex;
  flex: 1;
  gap: 9px;
  padding: 9px 9px 12px;
`;
const ListBox = styled.div`
  display: flex;
  flex: 1;
  padding: 1px 1px 1px 0;
  border: 1px solid #8f9aa8;
  background: #fff;
`;
const Tree = styled.ul`
  flex: 1;
  margin: 0;
  padding: 0;
  list-style: none;
`;
const TreeRow = styled.li`
  display: flex;
  align-items: center;
  height: 18px;
  white-space: nowrap;
`;
const RootBranch = styled.span`
  display: flex;
  align-items: center;
  width: 26px;
  height: 18px;
  padding-left: 9px;
  background:
    ${(props) => (props.$hide ? "none" : dots)} 13px 0 / 1px ${(props) => (props.$end ? "50%" : "100%")} no-repeat,
    ${(props) => (props.$plain ? "none" : dotsX)} 13px 50% / 12px 1px no-repeat;
`;
const ChildBranch = styled.span`
  width: 22px;
  height: 18px;
  background:
    ${dots} 8px 0 / 1px ${(props) => (props.$last ? "50%" : "100%")} no-repeat,
    ${dotsX} 8px 50% / 12px 1px no-repeat;
`;
const ScrollTrack = styled.div`
  display: flex;
  flex-direction: column;
  flex: none;
  width: 17px;
  background: linear-gradient(90deg, #e4edfc, #f6f9ff);
`;
const ScrollButton = styled.button`
  display: grid;
  place-items: center;
  flex: none;
  width: 17px;
  height: 17px;
  border: 1px solid #8fa8ca;
  border-radius: 2px;
  background: linear-gradient(#e4effd, #b4cdea);
`;
const ScrollGap = styled.span`
  height: ${(props) => props.$h}px;
`;
const ScrollThumb = styled.div`
  display: flex;
  flex-direction: column;
  flex: none;
  align-items: center;
  justify-content: center;
  gap: 1px;
  height: ${(props) => props.$h}px;
  border: 1px solid #8fa8ca;
  border-radius: 2px;
  background: linear-gradient(90deg, #e8f2ff, #cfe0f8 50%, #a6c2e6);
  i {
    width: 7px;
    height: 1px;
    background: #7f9cc2;
  }
`;
const ButtonColumn = styled.div`
  display: flex;
  flex-direction: column;
  gap: 7px;
  width: 93px;
`;
const XpButton = styled.button`
  width: 100%;
  height: 21px;
  padding-top: 1px;
  border: 1px solid #2f4f86;
  border-radius: 3px;
  background: linear-gradient(#fff, #eef2f8 45%, #b3c6e2);
  box-shadow: ${(props) => (props.$primary ? "inset 0 0 0 2px #6f9be0" : "none")};
`;
const DialogTabs = styled.div`
  display: flex;
  align-items: flex-end;
  gap: 2px;
  height: 28px;
  padding-left: 8px;
`;
const DialogTab = styled.button`
  height: 18px;
  padding: 1px 4px 0;
  border: 1px solid #8f9eb4;
  border-bottom: 0;
  border-radius: 3px 3px 0 0;
  background: linear-gradient(#fff, #e6edf7 50%, #b9cbe4);
  ${(props) =>
    props.$on &&
    css`
      height: 21px;
      margin: 0 -2px -1px;
      padding: 0 4px 2px;
      border-top: 2px solid #f0b030;
      background: #fbfbfd;
    `}
`;
const TabPage = styled.div`
  flex: 1;
  margin: 0 8px 0 6px;
  padding: 9px 8px 18px 11px;
  border: 1px solid #8f9eb4;
  background: linear-gradient(#f4f3f6, #eae8ec);
  box-shadow: inset 0 0 0 2px #fafafc;
`;
const TableBox = styled.div`
  display: flex;
  height: 154px;
  padding: 1px;
  border: 1px solid #8f9aa8;
  overflow: hidden;
  background: #fff;
`;
const ParamTable = styled.table`
  flex: 1;
  border-spacing: 0;
  table-layout: fixed;
  align-self: flex-start;
  font-family: "Liberation Sans", Arial, sans-serif;
  th {
    height: 20px;
    padding: 0 6px;
    border-bottom: 1px solid #c6c4c8;
    font-weight: normal;
    text-align: left;
  }
  td {
    height: 20px;
    padding: 0 3px;
    border-bottom: 1px solid #c6c4c8;
    white-space: nowrap;
  }
  th:first-child,
  td:first-child {
    width: 193px;
    border-right: 1px solid #c6c4c8;
  }
  tbody tr:nth-child(odd) {
    background: #e9e8ea;
  }
`;
const ParamName = styled.div`
  display: flex;
  align-items: center;
  gap: 2px;
`;
const DialogFooter = styled.div`
  display: flex;
  justify-content: flex-end;
  gap: 8px;
  padding: 9px 7px 8px 0;
  button {
    width: 73px;
  }
`;
